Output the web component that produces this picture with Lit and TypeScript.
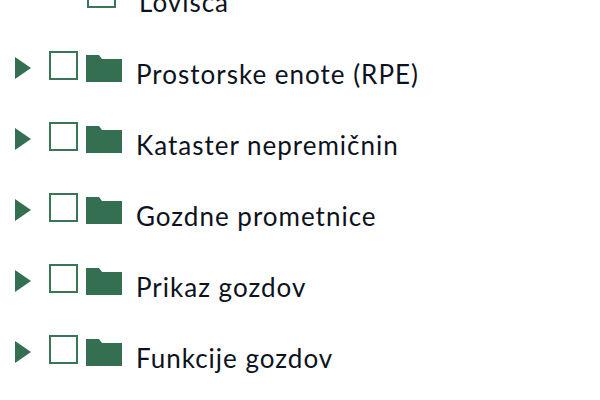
import { LitElement, html, css } from "lit";
import { customElement } from "lit/decorators.js";

const rows = ["Prostorske enote (RPE)", "Kataster nepremičnin", "Gozdne prometnice", "Prikaz gozdov", "Funkcije gozdov"];

@customElement("app-root")
export class AppRoot extends LitElement {
  static styles = css`
    :host { display: block; width: 600px; height: 400px; overflow: hidden; background: #fff;
      font-family: "Lato", "Noto Sans", sans-serif; font-size: 26px; letter-spacing: 1px; color: #0c1220; }
    .tree { display: flex; flex-direction: column; margin-top: -21px; }
    .child { display: flex; align-items: flex-start; height: 72px; padding-left: 87px; }
    .child .label { margin: 5px 0 0 23px; }
    .row { display: flex; align-items: flex-start; height: 71px; padding-left: 15px; }
    .tri { flex: none; width: 16px; height: 22px; margin-top: 6px; }
    .box { flex: none; box-sizing: border-box; width: 29px; height: 29px; border: 2px solid #3a7655; background: #fff; }
    .row .box { margin-left: 18px; }
    .folder { flex: none; width: 36px; height: 27px; margin: 4px 0 0 8px; }
    .label { margin: 5px 0 0 14px; line-height: 36px; white-space: nowrap; }
  `;
  render() {
    return html`<div class="tree">
      <div class="child"><span class="box"></span><span class="label">Lovišča</span></div>
      ${rows.map((r) => html`<div class="row">
        <svg class="tri" viewBox="0 0 16 22"><path d="M0 0 L16 11 L0 22 Z" fill="#336f50"/></svg>
        <span class="box"></span>
        <svg class="folder" viewBox="0 0 36 27"><path d="M0 0 H13 L16 4 H36 V27 H0 Z" fill="#336f50"/></svg>
        <span class="label">${r}</span>
      </div>`)}
    </div>`;
  }
}
